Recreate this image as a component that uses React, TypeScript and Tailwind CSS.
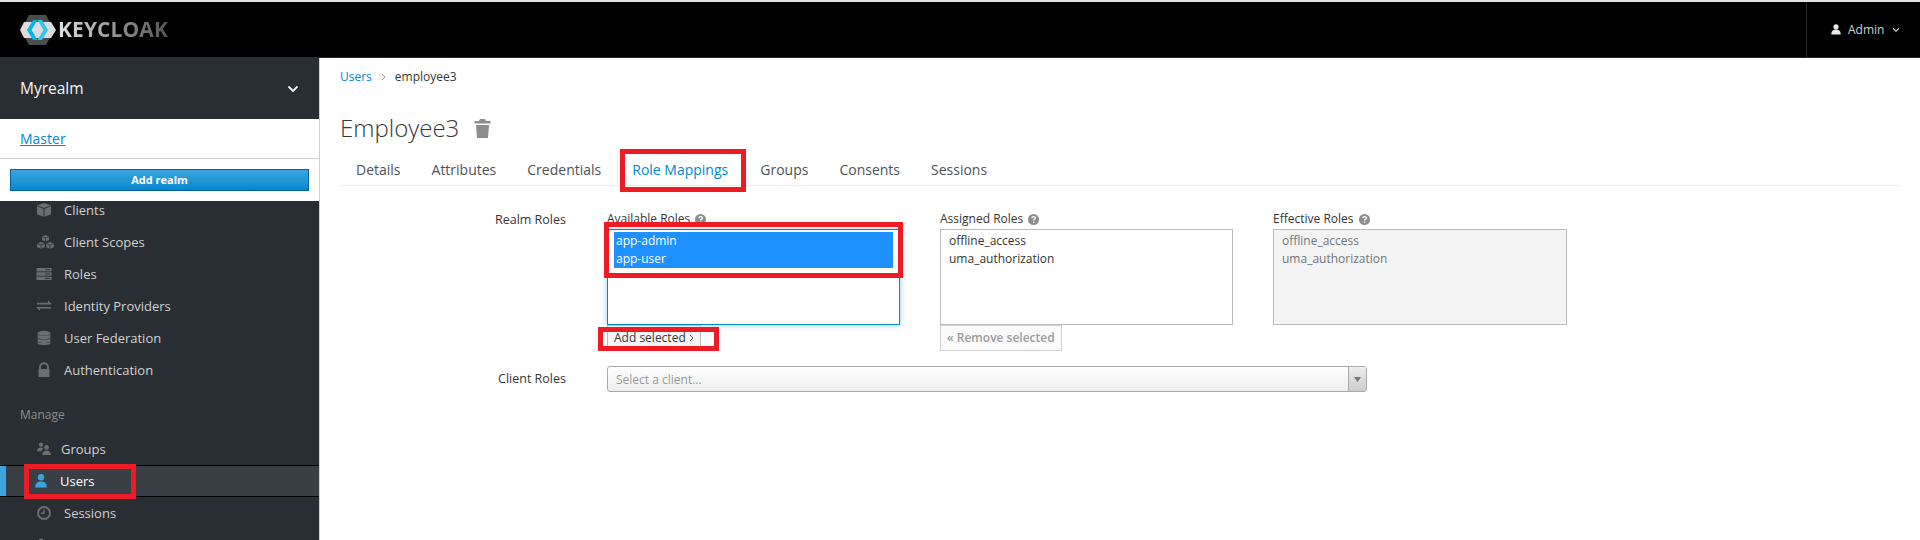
import React from "react";

const font = { fontFamily: '"Open Sans", "Noto Sans", sans-serif' };

function NavIcon({ name, active }: { name: string; active?: boolean }) {
  const c = active ? "#39a5dc" : "#6a6e73";
  const common = { width: 16, height: 16, viewBox: "0 0 16 16", fill: c };
  switch (name) {
    case "clients":
      return (
        <svg {...common}>
          <path d="M8 1l7 2.600v8.600L8 15l-7-2.800V3.600z" />
          <path d="M1.500 4l6.500 2.500L14.500 4M8 6.500V15" stroke="#292e34" strokeWidth="0.9" fill="none" />
        </svg>
      );
    case "scopes":
      return (
        <svg {...common} width={19} viewBox="0 0 19 16">
          <path d="M9.500 1l3.500 1.400v3.700L9.500 7.500 6 6.100V2.400z" />
          <path d="M5 8l3.700 1.400v3.900L5 14.800l-3.900-1.500V9.400z" />
          <path d="M14 8l3.900 1.400v3.900L14 14.800l-3.700-1.500V9.400z" />
          <path d="M6 2.600l3.500 1.400L13 2.600M9.500 4v3.500M1.100 9.600L5 11l3.700-1.400M5 11v3.800M10.300 9.600L14 11l3.900-1.400M14 11v3.800" stroke="#292e34" strokeWidth="0.8" fill="none" />
        </svg>
      );
    case "roles":
      return (
        <svg {...common}>
          <rect x="0.500" y="2" width="15" height="3.400" />
          <rect x="0.500" y="6.300" width="15" height="3.400" />
          <rect x="0.500" y="10.600" width="15" height="3.400" />
          <path d="M9 3.700h5M9 8h5M9 12.300h5" stroke="#292e34" strokeWidth="0.9" />
        </svg>
      );
    case "providers":
      return (
        <svg {...common}>
          <path d="M1 4.800h11V2.600L15.500 6v.6H1zM15 10.500H4v2.300L.5 9.800v-.9H15z" />
        </svg>
      );
    case "federation":
      return (
        <svg {...common}>
          <ellipse cx="8" cy="3.200" rx="6.400" ry="2.400" />
          <path d="M1.600 4.600C2.600 6.200 13.400 6.200 14.400 4.600v2.500c0 1.300-2.900 2.200-6.400 2.200S1.600 8.400 1.600 7.100z" />
          <path d="M1.600 8.300c1 1.600 11.800 1.600 12.800 0v2.400c0 1.300-2.900 2.200-6.400 2.200s-6.400-.9-6.400-2.200z" />
          <path d="M1.600 11.800c1 1.600 11.800 1.600 12.800 0v1.100c0 1.300-2.900 2.200-6.400 2.200s-6.400-.9-6.400-2.200z" />
        </svg>
      );
    case "lock":
      return (
        <svg {...common}>
          <path d="M3 7V5.200a5 5 0 0 1 10 0V7h.5v8h-11V7zM5 7h6V5.200a3 3 0 0 0-6 0z" />
        </svg>
      );
    case "groups":
      return (
        <svg {...common}>
          <circle cx="5" cy="3.600" r="2.200" />
          <path d="M1 10.200c0-2.400 1.600-3.700 4-3.700 1.200 0 2 .3 2.700.8-1.200.7-2 1.900-2.200 2.900z" />
          <circle cx="10.600" cy="6.400" r="2.400" />
          <path d="M6.300 14c0-3 1.700-4.600 4.300-4.600S15 11 15 14z" />
        </svg>
      );
    case "user":
      return (
        <svg {...common}>
          <circle cx="8" cy="4.200" r="3.200" />
          <path d="M2.200 14.600c0-4 1.800-6.100 5.800-6.100s5.800 2.100 5.800 6.100z" />
        </svg>
      );
    case "sessions":
      return (
        <svg {...common} fill="none" stroke={c}>
          <circle cx="8" cy="8" r="6" strokeWidth="2" />
          <path d="M8 4.200V8.300H4.800" strokeWidth="1.400" />
        </svg>
      );
    default:
      return null;
  }
}

function NavRow({ icon, label, indent = 64 }: { icon: string; label?: string; indent?: number }) {
  return (
    <div className="relative flex h-8 items-center pt-[2px] text-[13px] text-[#d1d1d1]" style={{ paddingLeft: indent }}>
      <span className="absolute left-[36px] top-[8px] flex h-4 w-[20px] items-center">
        <NavIcon name={icon} />
      </span>
      {label}
    </div>
  );
}

function Help() {
  return (
    <svg className="ml-[5px] inline-block" width="11" height="11" viewBox="0 0 10 10">
      <circle cx="5" cy="5" r="5" fill="#8b8d8f" />
      <path d="M3.400 3.800c.1-1 .8-1.500 1.700-1.500 1 0 1.600.6 1.600 1.300 0 1.200-1.600 1.200-1.600 2.400" stroke="#fff" strokeWidth="1.100" fill="none" />
      <rect x="4.500" y="6.800" width="1.200" height="1.200" fill="#fff" />
    </svg>
  );
}

function ListCol({ title, children, className }: { title: string; children: React.ReactNode; className: string }) {
  return (
    <div>
      <div className="flex h-[18px] items-center pb-[2px] text-[12px] text-[#363636]">
        {title}
        <Help />
      </div>
      <div className={"h-[96px] border px-[6px] py-[2px] text-[12px] leading-[18px] " + className}>{children}</div>
    </div>
  );
}

export default function App() {
  return (
    <div className="flex h-[540px] w-[1920px] flex-col overflow-hidden bg-white" style={font}>
      <div className="h-[2px] bg-[#e4e4e4]" />
      <header className="flex h-[56px] items-center justify-between border-b border-[#2b2b2b] bg-black">
        <div className="flex items-center pl-[20px]">
          <svg width="38" height="30" viewBox="0 0 38 30">
            <path d="M9 0h17l8 15-8 15H9L1 15z" fill="#4d4d4d" />
            <path d="M0 15l4-8h27l5 8-5 8H4z" fill="#dcdcdc" />
            <path d="M13 5L7 15l6 10h4.500L11.500 15l6-10z" fill="#00b8e3" />
            <path d="M22 5l6 10-6 10h-4.500L23.500 15l-6-10z" fill="#33c6e9" />
          </svg>
          <span className="bg-gradient-to-r from-[#e2e2e2] to-[#555555] bg-clip-text text-[21px] font-bold tracking-[0.1px] text-transparent">
            KEYCLOAK
          </span>
        </div>
        <div className="flex h-full items-center border-l border-[#2b2b2b] text-[12px] text-[#d1d1d1]">
          <div className="flex w-[113px] items-center pl-[24px]">
            <svg width="10" height="11" viewBox="0 0 10 11" fill="#e8e8e8">
              <circle cx="5" cy="2.800" r="2.600" />
              <path d="M0.300 10.600C.3 7 2 5.600 5 5.600s4.700 1.400 4.700 5z" />
            </svg>
            <span className="ml-[7px]">Admin</span>
            <svg className="ml-[8px]" width="8" height="6" viewBox="0 0 8 6" fill="none" stroke="#d1d1d1" strokeWidth="1.200">
              <path d="M1 1.200l3 3 3-3" />
            </svg>
          </div>
        </div>
      </header>

      <div className="flex min-h-0 flex-1">
        <aside className="w-[320px] shrink-0 overflow-hidden border-r border-[#d1d1d1] bg-[#292e34]">
          <div className="flex h-[61px] items-center justify-between px-[20px] text-[15.5px] text-[#f5f5f5]">
            Myrealm
            <svg width="12" height="8" viewBox="0 0 12 8" fill="none" stroke="#f5f5f5" strokeWidth="1.800">
              <path d="M1.500 1.500L6 6l4.500-4.500" />
            </svg>
          </div>
          <div className="flex h-[40px] items-center border-b border-[#d1d1d1] bg-white pl-[20px] text-[14px] text-[#0088ce] underline">
            Master
          </div>
          <div className="h-[42px] bg-white px-[10px] pt-[10px]">
            <div className="flex h-[22px] items-center justify-center border border-[#00659c] bg-gradient-to-b from-[#39a5dc] to-[#0088ce] text-[11px] font-bold text-white">
              Add realm
            </div>
          </div>
          <div className="-mt-[7px]">
            <NavRow icon="clients" label="Clients" />
            <NavRow icon="scopes" label="Client Scopes" />
            <NavRow icon="roles" label="Roles" />
            <NavRow icon="providers" label="Identity Providers" />
            <NavRow icon="federation" label="User Federation" />
            <NavRow icon="lock" label="Authentication" />
            <div className="mt-[16px] flex h-[26px] items-center pl-[20px] text-[12px] text-[#8b8d8f]">Manage</div>
            <div className="h-[5px]" />
            <NavRow icon="groups" label="Groups" indent={61} />
            <div className="relative flex h-[32px] items-center border-y border-black bg-[#393f44] pl-[60px] pt-[1px] text-[13px] text-white">
              <span className="absolute left-0 top-0 h-full w-[6px] bg-[#39a5dc]" />
              <span className="absolute left-[33px] top-[7px]">
                <NavIcon name="user" active />
              </span>
              Users
              <span className="absolute left-[24px] top-[-2px] h-[35px] w-[112px] border-[5px] border-[#ed1c24]" />
            </div>
            <NavRow icon="sessions" label="Sessions" />
            <NavRow icon="groups" />
          </div>
        </aside>

        <main className="min-w-0 flex-1 px-[20px]">
          <div className="flex h-[36px] items-center pt-[1px] text-[12px] text-[#363636]">
            <span className="text-[#0088ce]">Users</span>
            <svg className="mx-[9px]" width="5" height="8" viewBox="0 0 5 8" fill="none" stroke="#9c9c9c">
              <path d="M1 1l3 3-3 3" />
            </svg>
            employee3
          </div>
          <div className="mt-[16px] flex h-[36px] items-center text-[24px] font-light text-[#363636]">
            Employee3
            <svg className="ml-[15px]" width="17" height="19" viewBox="0 0 17 19" fill="#8b8d8f">
              <path d="M6 0h5l1 2h4.500v2.500H.5V2H5zM2 6h13l-1 13H3z" />
            </svg>
          </div>
          <div className="mt-[4px] flex h-[36px] items-center border-b border-[#ededed] pt-[3px] text-[14px] text-[#4d5258]">
            <div className="ml-[16px]">Details</div>
            <div className="ml-[31px]">Attributes</div>
            <div className="ml-[31px]">Credentials</div>
            <div className="relative ml-[31px] text-[#0088ce]">
              Role Mappings
              <span className="absolute left-[-15px] top-[-9px] h-[35px] w-[1px] bg-[#ededed]" />
              <span className="absolute left-[-12px] top-[-10px] h-[43px] w-[126px] border-[5px] border-[#ed1c24] bg-transparent" />
            </div>
            <div className="ml-[32px]">Groups</div>
            <div className="ml-[31px]">Consents</div>
            <div className="ml-[31px]">Sessions</div>
          </div>

          <div className="mt-[25px] flex">
            <div className="w-[226px] text-right text-[12.5px] text-[#363636]">Realm Roles</div>
            <div className="ml-[41px] flex gap-[40px]">
              <div className="relative w-[293px]">
                <ListCol title="Available Roles" className="border-[#0088ce] shadow-[0_0_6px_rgba(0,136,206,0.45)]">
                  <div className="bg-[#1e90ff] px-[2px] text-white">
                    <div>app-admin</div>
                    <div>app-user</div>
                  </div>
                </ListCol>
                <span className="absolute left-[-3px] top-[11px] h-[56px] w-[299px] border-[5px] border-[#ed1c24]" />
                <div className="relative flex h-[26px] w-[94px] items-center border border-[#bbb] bg-[#f5f5f5] pl-[6px] text-[12px] text-[#363636]">
                  Add selected
                  <svg className="ml-[3px]" width="5" height="8" viewBox="0 0 5 8" fill="none" stroke="#4d5258">
                    <path d="M1 1l3 3-3 3" />
                  </svg>
                  <span className="absolute left-[-10px] top-[1px] h-[24px] w-[121px] border-[5px] border-[#ed1c24]" />
                </div>
              </div>
              <div className="w-[293px]">
                <ListCol title="Assigned Roles" className="border-[#bbb] text-[#363636]">
                  <div className="px-[2px]">offline_access</div>
                  <div className="px-[2px]">uma_authorization</div>
                </ListCol>
                <div className="flex h-[26px] w-[122px] items-center border border-[#d1d1d1] bg-[#fafafa] pl-[6px] text-[12px] font-semibold text-[#9c9c9c]">
                  « Remove selected
                </div>
              </div>
              <div className="w-[294px]">
                <ListCol title="Effective Roles" className="border-[#bbb] bg-[#f4f4f4] text-[#72767b]">
                  <div className="px-[2px]">offline_access</div>
                  <div className="px-[2px]">uma_authorization</div>
                </ListCol>
              </div>
            </div>
          </div>

          <div className="mt-[15px] flex items-center">
            <div className="w-[226px] pt-[1px] text-right text-[12.5px] text-[#363636]">Client Roles</div>
            <div className="ml-[41px] flex h-[26px] w-[760px] items-center justify-between rounded-[3px] border border-[#aaa] bg-gradient-to-b from-white to-[#eeeeee] pl-[8px] text-[12px] text-[#999]">
              <span className="pt-[1px]">Select a client...</span>
              <div className="flex h-full w-[18px] items-center justify-center border-l border-[#aaa] bg-gradient-to-b from-[#eeeeee] to-[#cccccc]">
                <svg width="7" height="5" viewBox="0 0 7 5" fill="#777">
                  <path d="M0 0h7L3.500 5z" />
                </svg>
              </div>
            </div>
          </div>
        </main>
      </div>
    </div>
  );
}
